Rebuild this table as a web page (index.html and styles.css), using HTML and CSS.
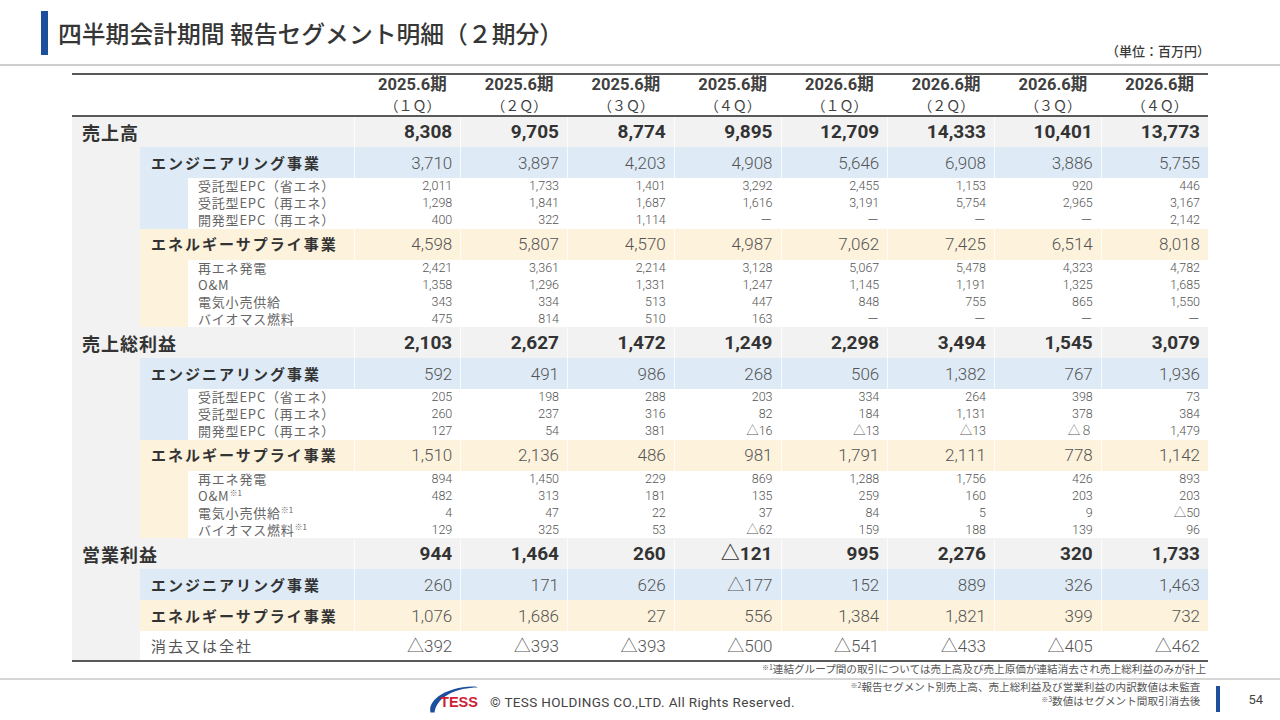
FILE: index.html
```html
<!DOCTYPE html>
<html lang="ja">
<head>
<meta charset="utf-8">
<title>四半期会計期間 報告セグメント明細</title>
<link rel="stylesheet" href="styles.css">
</head>
<body>
<header class="top">
  <div class="title-wrap">
    <div class="bar"></div>
    <h1>四半期会計期間 報告セグメント明細（２期分）</h1>
  </div>
  <div class="unit">（単位：百万円）</div>
</header>

<main class="content">
<table class="tbl">
  <colgroup>
    <col class="c1"><col class="c2"><col class="c3">
    <col class="cn"><col class="cn"><col class="cn"><col class="cn">
    <col class="cn"><col class="cn"><col class="cn"><col class="cn">
  </colgroup>
  <thead>
    <tr>
      <th colspan="3"></th>
      <th><span class="y">2025.6期</span><span class="q">（１Ｑ）</span></th>
      <th><span class="y">2025.6期</span><span class="q">（２Ｑ）</span></th>
      <th><span class="y">2025.6期</span><span class="q">（３Ｑ）</span></th>
      <th><span class="y">2025.6期</span><span class="q">（４Ｑ）</span></th>
      <th><span class="y">2026.6期</span><span class="q">（１Ｑ）</span></th>
      <th><span class="y">2026.6期</span><span class="q">（２Ｑ）</span></th>
      <th><span class="y">2026.6期</span><span class="q">（３Ｑ）</span></th>
      <th><span class="y">2026.6期</span><span class="q">（４Ｑ）</span></th>
    </tr>
  </thead>
  <tbody>
    <tr class="main"><td colspan="3" class="lab">売上高</td><td class="n">8,308</td><td class="n">9,705</td><td class="n">8,774</td><td class="n">9,895</td><td class="n">12,709</td><td class="n">14,333</td><td class="n">10,401</td><td class="n">13,773</td></tr>
    <tr class="seg e"><td class="g"></td><td colspan="2" class="lab">エンジニアリング事業</td><td class="n">3,710</td><td class="n">3,897</td><td class="n">4,203</td><td class="n">4,908</td><td class="n">5,646</td><td class="n">6,908</td><td class="n">3,886</td><td class="n">5,755</td></tr>
    <tr class="sub"><td class="g"></td><td class="side e"></td><td class="lab">受託型EPC（省エネ）</td><td class="n">2,011</td><td class="n">1,733</td><td class="n">1,401</td><td class="n">3,292</td><td class="n">2,455</td><td class="n">1,153</td><td class="n">920</td><td class="n">446</td></tr>
    <tr class="sub"><td class="g"></td><td class="side e"></td><td class="lab">受託型EPC（再エネ）</td><td class="n">1,298</td><td class="n">1,841</td><td class="n">1,687</td><td class="n">1,616</td><td class="n">3,191</td><td class="n">5,754</td><td class="n">2,965</td><td class="n">3,167</td></tr>
    <tr class="sub"><td class="g"></td><td class="side e"></td><td class="lab">開発型EPC（再エネ）</td><td class="n">400</td><td class="n">322</td><td class="n">1,114</td><td class="n">－</td><td class="n">－</td><td class="n">－</td><td class="n">－</td><td class="n">2,142</td></tr>
    <tr class="seg s"><td class="g"></td><td colspan="2" class="lab">エネルギーサプライ事業</td><td class="n">4,598</td><td class="n">5,807</td><td class="n">4,570</td><td class="n">4,987</td><td class="n">7,062</td><td class="n">7,425</td><td class="n">6,514</td><td class="n">8,018</td></tr>
    <tr class="sub"><td class="g"></td><td class="side s"></td><td class="lab">再エネ発電</td><td class="n">2,421</td><td class="n">3,361</td><td class="n">2,214</td><td class="n">3,128</td><td class="n">5,067</td><td class="n">5,478</td><td class="n">4,323</td><td class="n">4,782</td></tr>
    <tr class="sub"><td class="g"></td><td class="side s"></td><td class="lab">O&amp;M</td><td class="n">1,358</td><td class="n">1,296</td><td class="n">1,331</td><td class="n">1,247</td><td class="n">1,145</td><td class="n">1,191</td><td class="n">1,325</td><td class="n">1,685</td></tr>
    <tr class="sub"><td class="g"></td><td class="side s"></td><td class="lab">電気小売供給</td><td class="n">343</td><td class="n">334</td><td class="n">513</td><td class="n">447</td><td class="n">848</td><td class="n">755</td><td class="n">865</td><td class="n">1,550</td></tr>
    <tr class="sub"><td class="g"></td><td class="side s"></td><td class="lab">バイオマス燃料</td><td class="n">475</td><td class="n">814</td><td class="n">510</td><td class="n">163</td><td class="n">－</td><td class="n">－</td><td class="n">－</td><td class="n">－</td></tr>

    <tr class="main"><td colspan="3" class="lab">売上総利益</td><td class="n">2,103</td><td class="n">2,627</td><td class="n">1,472</td><td class="n">1,249</td><td class="n">2,298</td><td class="n">3,494</td><td class="n">1,545</td><td class="n">3,079</td></tr>
    <tr class="seg e"><td class="g"></td><td colspan="2" class="lab">エンジニアリング事業</td><td class="n">592</td><td class="n">491</td><td class="n">986</td><td class="n">268</td><td class="n">506</td><td class="n">1,382</td><td class="n">767</td><td class="n">1,936</td></tr>
    <tr class="sub"><td class="g"></td><td class="side e"></td><td class="lab">受託型EPC（省エネ）</td><td class="n">205</td><td class="n">198</td><td class="n">288</td><td class="n">203</td><td class="n">334</td><td class="n">264</td><td class="n">398</td><td class="n">73</td></tr>
    <tr class="sub"><td class="g"></td><td class="side e"></td><td class="lab">受託型EPC（再エネ）</td><td class="n">260</td><td class="n">237</td><td class="n">316</td><td class="n">82</td><td class="n">184</td><td class="n">1,131</td><td class="n">378</td><td class="n">384</td></tr>
    <tr class="sub"><td class="g"></td><td class="side e"></td><td class="lab">開発型EPC（再エネ）</td><td class="n">127</td><td class="n">54</td><td class="n">381</td><td class="n">△16</td><td class="n">△13</td><td class="n">△13</td><td class="n">△８</td><td class="n">1,479</td></tr>
    <tr class="seg s"><td class="g"></td><td colspan="2" class="lab">エネルギーサプライ事業</td><td class="n">1,510</td><td class="n">2,136</td><td class="n">486</td><td class="n">981</td><td class="n">1,791</td><td class="n">2,111</td><td class="n">778</td><td class="n">1,142</td></tr>
    <tr class="sub"><td class="g"></td><td class="side s"></td><td class="lab">再エネ発電</td><td class="n">894</td><td class="n">1,450</td><td class="n">229</td><td class="n">869</td><td class="n">1,288</td><td class="n">1,756</td><td class="n">426</td><td class="n">893</td></tr>
    <tr class="sub"><td class="g"></td><td class="side s"></td><td class="lab">O&amp;M<sup>※1</sup></td><td class="n">482</td><td class="n">313</td><td class="n">181</td><td class="n">135</td><td class="n">259</td><td class="n">160</td><td class="n">203</td><td class="n">203</td></tr>
    <tr class="sub"><td class="g"></td><td class="side s"></td><td class="lab">電気小売供給<sup>※1</sup></td><td class="n">4</td><td class="n">47</td><td class="n">22</td><td class="n">37</td><td class="n">84</td><td class="n">5</td><td class="n">9</td><td class="n">△50</td></tr>
    <tr class="sub"><td class="g"></td><td class="side s"></td><td class="lab">バイオマス燃料<sup>※1</sup></td><td class="n">129</td><td class="n">325</td><td class="n">53</td><td class="n">△62</td><td class="n">159</td><td class="n">188</td><td class="n">139</td><td class="n">96</td></tr>

    <tr class="main"><td colspan="3" class="lab">営業利益</td><td class="n">944</td><td class="n">1,464</td><td class="n">260</td><td class="n">△121</td><td class="n">995</td><td class="n">2,276</td><td class="n">320</td><td class="n">1,733</td></tr>
    <tr class="seg e"><td class="g"></td><td colspan="2" class="lab">エンジニアリング事業</td><td class="n">260</td><td class="n">171</td><td class="n">626</td><td class="n">△177</td><td class="n">152</td><td class="n">889</td><td class="n">326</td><td class="n">1,463</td></tr>
    <tr class="seg s"><td class="g"></td><td colspan="2" class="lab">エネルギーサプライ事業</td><td class="n">1,076</td><td class="n">1,686</td><td class="n">27</td><td class="n">556</td><td class="n">1,384</td><td class="n">1,821</td><td class="n">399</td><td class="n">732</td></tr>
    <tr class="seg o"><td class="g"></td><td colspan="2" class="lab">消去又は全社</td><td class="n">△392</td><td class="n">△393</td><td class="n">△393</td><td class="n">△500</td><td class="n">△541</td><td class="n">△433</td><td class="n">△405</td><td class="n">△462</td></tr>
  </tbody>
</table>
<p class="note1"><sup>※1</sup>連結グループ間の取引については売上高及び売上原価が連結消去され売上総利益のみが計上</p>
</main>

<footer class="foot">
  <svg class="logo" width="52" height="28" viewBox="0 0 52 28" aria-label="TESS">
    <path d="M2.5 27.5 C -0.5 16 16 2.5 44 1.5 C 47 1.4 49 1.8 50 2.6 C 30 2.5 9 11 6.5 27.5 Z" fill="#1c4f9d"/>
    <text x="12" y="22" font-family="Liberation Sans, Arial, sans-serif" font-weight="700" font-size="15" fill="#cf1f36" textLength="38" lengthAdjust="spacingAndGlyphs">TESS</text>
  </svg>
  <span class="copy">© TESS HOLDINGS CO.,LTD. All Rights Reserved.</span>
  <div class="notes">
    <p><sup>※2</sup>報告セグメント別売上高、売上総利益及び営業利益の内訳数値は未監査</p>
    <p><sup>※3</sup>数値はセグメント間取引消去後</p>
  </div>
  <div class="pbar"></div>
  <span class="page">54</span>
</footer>
</body>
</html>
```

FILE: styles.css
```css
* { box-sizing: border-box; }

html, body {
  margin: 0;
  padding: 0;
}

body {
  width: 1280px;
  height: 720px;
  overflow: hidden;
  background: #ffffff;
  color: #333333;
  font-family: Roboto, "Noto Sans CJK JP", sans-serif;
}

/* ---------- header ---------- */
.top {
  height: 66px;
  border-bottom: 2px solid #cfcfcf;
  display: flex;
  justify-content: space-between;
  align-items: flex-start;
  padding: 11px 70px 0 41px;
}

.title-wrap {
  display: flex;
  align-items: center;
  gap: 10px;
  height: 44px;
}

.bar {
  width: 7px;
  height: 44px;
  background: #1d4f9c;
}

.top h1 {
  margin: 0;
  font-family: "Noto Sans CJK JP", sans-serif;
  font-weight: 500;
  font-size: 23.8px;
  line-height: 30px;
  color: #363636;
  letter-spacing: 0;
}

.unit {
  align-self: flex-end;
  margin-bottom: 6px;
  font-family: "Noto Sans CJK JP", sans-serif;
  font-weight: 500;
  font-size: 13px;
  line-height: 15px;
  color: #3a3a3a;
}

/* ---------- table ---------- */
.content {
  padding: 7px 72px 0 72px;
}

.tbl {
  width: 1136px;
  border-collapse: collapse;
  table-layout: fixed;
}

.c1 { width: 68px; }
.c2 { width: 48px; }
.c3 { width: 166px; }
.cn { width: 106.75px; }

.tbl th,
.tbl td {
  padding: 0;
  white-space: nowrap;
}

.tbl thead th {
  height: 41px;
  border-top: 2px solid #595959;
  border-bottom: 2px solid #595959;
  text-align: center;
  vertical-align: middle;
  padding-left: 10px;
  font-weight: 400;
  color: #404040;
}

.y {
  display: block;
  font-weight: 700;
  font-size: 16.5px;
  line-height: 19.5px;
}

.q {
  display: block;
  font-family: "Noto Sans CJK JP", sans-serif;
  font-size: 14px;
  line-height: 20.5px;
}

.tbl td.n {
  text-align: right;
  padding-right: 8px;
  border-left: 1px solid rgba(255, 255, 255, 0.75);
}

.g { background: #f2f2f2; }

/* main rows */
.main td {
  height: 31px;
  line-height: 20px;
  background: #f2f2f2;
}

.main .lab {
  font-family: "Noto Sans CJK JP", sans-serif;
  font-weight: 700;
  font-size: 18px;
  letter-spacing: 1px;
  padding-left: 10px;
  color: #333333;
}

.main .n {
  font-weight: 700;
  font-size: 19px;
  color: #333333;
}

/* segment rows */
.seg td {
  height: 31px;
  line-height: 20px;
}

.seg.e td:not(.g) { background: #deebf7; }
.seg.s td:not(.g) { background: #fdf2dc; }
.seg.o td:not(.g) { background: #ffffff; }

.seg .lab {
  font-family: "Noto Sans CJK JP", sans-serif;
  font-weight: 700;
  font-size: 15px;
  letter-spacing: 2px;
  padding-left: 11px;
  color: #333333;
}

.seg.o .lab {
  font-weight: 400;
  color: #555555;
}

.seg .n {
  font-weight: 300;
  font-size: 17px;
  color: #555555;
}

.seg.o td.n {
  border-left-color: transparent;
}

.tbl tbody tr:last-child td {
  height: 30px;
  border-bottom: 2px solid #595959;
}

/* sub rows */
.sub td {
  height: 16.86px;
  line-height: 16px;
}

.side.e { background: #deebf7; }
.side.s { background: #fdf2dc; }

.sub .lab {
  font-family: "Noto Sans CJK JP", sans-serif;
  font-size: 13px;
  letter-spacing: 0.8px;
  color: #666666;
  padding-left: 10px;
}

.sub .n {
  font-weight: 300;
  font-size: 12.5px;
  color: #555555;
  border-left-color: transparent;
}

.tbl sup {
  font-size: 8px;
  line-height: 0;
  vertical-align: 5px;
  letter-spacing: 0;
}

/* ---------- notes / footer ---------- */
.note1 {
  margin: 0;
  height: 16px;
  padding-right: 2px;
  text-align: right;
  font-family: "Noto Sans CJK JP", sans-serif;
  font-size: 10.6px;
  line-height: 14px;
  color: #555555;
}

.note1 sup,
.notes sup {
  font-size: 7px;
  line-height: 0;
  vertical-align: 3px;
}

.foot {
  height: 40px;
  border-top: 2px solid #d6d6d6;
  display: flex;
  align-items: center;
  padding-left: 428px;
}

.logo {
  display: block;
  flex: none;
}

.copy {
  margin-left: 10px;
  padding-top: 5px;
  font-family: Roboto, sans-serif;
  font-size: 13.5px;
  color: #444444;
  letter-spacing: 0.35px;
}

.notes {
  margin-left: auto;
  align-self: flex-start;
  text-align: right;
  font-family: "Noto Sans CJK JP", sans-serif;
  font-size: 10.6px;
  line-height: 14px;
  color: #555555;
}

.notes p {
  margin: 0;
}

.pbar {
  width: 4px;
  height: 26px;
  margin-left: 16px;
  background: #1d4f9c;
}

.page {
  margin-left: 28px;
  margin-right: 17px;
  font-family: Roboto, sans-serif;
  font-size: 13px;
  color: #444444;
}
```
